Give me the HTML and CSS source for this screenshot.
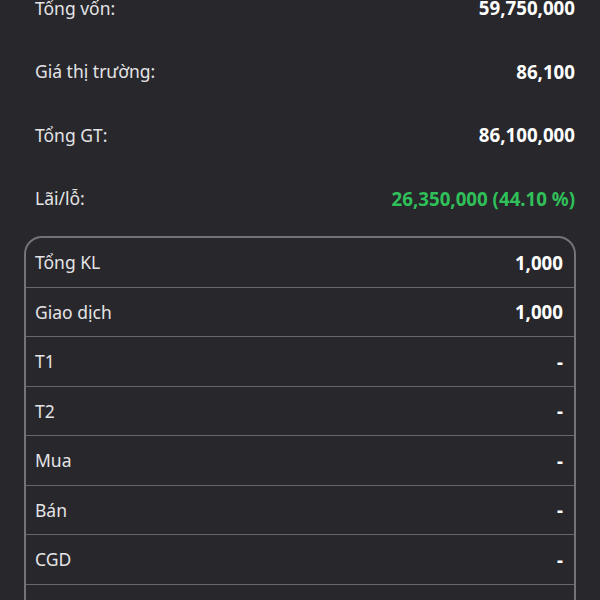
FILE: index.html
```html
<!DOCTYPE html>
<html lang="vi">
<head>
  <meta charset="UTF-8" />
  <meta name="viewport" content="width=device-width, initial-scale=1" />
  <title>Chi tiết danh mục</title>
  <link rel="stylesheet" href="styles.css">
</head>
<body>

  <div class="summary">
    <div class="sum-row">
      <span class="label">Tổng vốn:</span>
      <span class="value">59,750,000</span>
    </div>
    <div class="sum-row">
      <span class="label">Giá thị trường:</span>
      <span class="value">86,100</span>
    </div>
    <div class="sum-row">
      <span class="label">Tổng GT:</span>
      <span class="value">86,100,000</span>
    </div>
    <div class="sum-row">
      <span class="label">Lãi/lỗ:</span>
      <span class="value up">26,350,000 (44.10 %)</span>
    </div>
  </div>

  <!-- BẢNG KHỐI LƯỢNG -->
  <div class="kl-table">
    <div class="row"><span class="label">Tổng KL</span><span class="value">1,000</span></div>
    <div class="row"><span class="label">Giao dịch</span><span class="value">1,000</span></div>
    <div class="row"><span class="label">T1</span><span class="value">-</span></div>
    <div class="row"><span class="label">T2</span><span class="value">-</span></div>
    <div class="row"><span class="label">Mua</span><span class="value">-</span></div>
    <div class="row"><span class="label">Bán</span><span class="value">-</span></div>
    <div class="row"><span class="label">CGD</span><span class="value">-</span></div>
    <div class="row"><span class="label">Cầm cố</span><span class="value">-</span></div>
  </div>

</body>
</html>
```

FILE: styles.css
```css
body {
  font-family: "Noto Sans", "Open Sans", sans-serif;
  background: #28272c;
  color: #e4e4e6;
  margin: 0;
  font-size: 17.5px;
  overflow: hidden;
}

.summary {
  margin-top: -24px;
  padding: 0 25px 0 35px;
}

.sum-row {
  display: flex;
  justify-content: space-between;
  align-items: center;
  height: 63.5px;
}

.label {
  color: #e4e4e6;
}

.value {
  font-weight: bold;
  font-size: 18.7px;
  color: #ffffff;
}

.value.up {
  color: #30c05a;
}

.kl-table {
  margin: 6px 24px 0 24px;
  border: 2px solid #737278;
  border-radius: 18px;
}

.row {
  display: flex;
  justify-content: space-between;
  align-items: center;
  height: 48.5px;
  padding: 0 11px 0 9px;
  border-bottom: 1px solid #67666c;
}
```
